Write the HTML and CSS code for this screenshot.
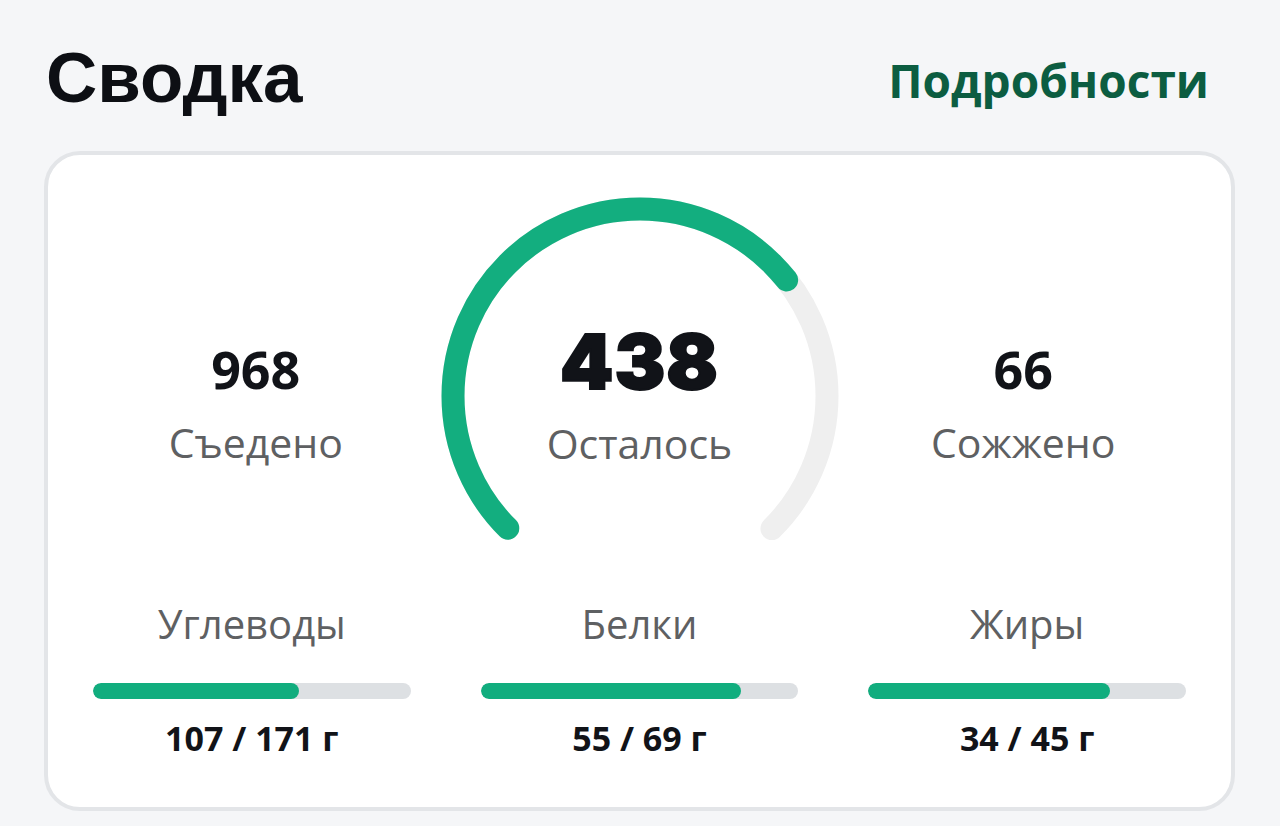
FILE: index.html
```html
<!DOCTYPE html>
<html lang="ru">
<head>
    <meta charset="UTF-8">
    <meta name="viewport" content="width=device-width, initial-scale=1.0">
    <title>Сводка</title>
    <link rel="stylesheet" href="styles.css">
</head>
<body>
    <div class="page">
        <div class="header">
            <h1>Сводка</h1>
            <a class="details" href="#">Подробности</a>
        </div>

        <div class="card">
            <div class="top-row">
                <div class="stat">
                    <div class="stat-value">968</div>
                    <div class="stat-label">Съедено</div>
                </div>

                <div class="gauge">
                    <!-- дуга 270°, начинается снизу слева -->
                    <svg width="400" height="400" viewBox="0 0 400 400">
                        <circle class="gauge-track" cx="200" cy="200" r="187"
                                stroke-dasharray="881.3 293.7" transform="rotate(135 200 200)"></circle>
                        <circle class="gauge-fill" cx="200" cy="200" r="187"
                                stroke-dasharray="609 566" transform="rotate(135 200 200)"></circle>
                    </svg>
                    <div class="gauge-center">
                        <div class="gauge-value">438</div>
                        <div class="stat-label">Осталось</div>
                    </div>
                </div>

                <div class="stat">
                    <div class="stat-value">66</div>
                    <div class="stat-label">Сожжено</div>
                </div>
            </div>

            <div class="macros">
                <div class="macro">
                    <div class="macro-name">Углеводы</div>
                    <div class="bar"><div class="bar-fill" style="width: 65%;"></div></div>
                    <div class="macro-value">107 / 171 г</div>
                </div>
                <div class="macro">
                    <div class="macro-name">Белки</div>
                    <div class="bar"><div class="bar-fill" style="width: 82%;"></div></div>
                    <div class="macro-value">55 / 69 г</div>
                </div>
                <div class="macro">
                    <div class="macro-name">Жиры</div>
                    <div class="bar"><div class="bar-fill" style="width: 76%;"></div></div>
                    <div class="macro-value">34 / 45 г</div>
                </div>
            </div>
        </div>
    </div>
</body>
</html>
```

FILE: styles.css
```css
html, body {
    margin: 0;
    padding: 0;
    background-color: #f5f6f8;
    font-family: "Open Sans", "Noto Sans", sans-serif;
    color: #111318;
}
.page {
    padding: 42px 45px 0 44px;
}
.header {
    display: flex;
    justify-content: space-between;
    align-items: center;
    margin-bottom: 38px;
}
h1 {
    margin: 0 0 0 2px;
    font-family: "Liberation Sans", Arial, sans-serif;
    font-weight: bold;
    font-size: 71px;
    line-height: 1;
    color: #0d0f14;
}
.details {
    font-size: 46px;
    font-weight: 700;
    line-height: 1;
    color: #0c5d41;
    text-decoration: none;
    padding: 4px 26px 0 0;
}
.card {
    background-color: #fff;
    border: 4px solid #e3e5e8;
    border-radius: 36px;
    padding: 41px 0 48px;
}
.top-row {
    display: grid;
    grid-template-columns: 1fr 400px 1fr;
    padding: 0 24px;
}
.stat {
    display: flex;
    flex-direction: column;
    align-items: center;
    padding-top: 142px;
}
.stat-value {
    font-size: 52px;
    font-weight: 700;
    line-height: 1.2;
    margin-bottom: 18px;
}
.stat-label {
    font-size: 41px;
    line-height: 1.2;
    color: #5e6062;
}
.gauge {
    position: relative;
    width: 400px;
    height: 400px;
}
.gauge svg {
    display: block;
}
.gauge circle {
    fill: none;
    stroke-width: 23;
    stroke-linecap: round;
}
.gauge-track {
    stroke: #efefef;
}
.gauge-fill {
    stroke: #13ae7f;
}
.gauge-center {
    position: absolute;
    top: 0;
    left: 0;
    right: 0;
    bottom: 0;
    display: flex;
    flex-direction: column;
    align-items: center;
    padding-top: 120px;
}
.gauge-value {
    font-family: Inter, sans-serif;
    font-weight: 900;
    font-size: 76px;
    line-height: 1.2;
    letter-spacing: 1px;
    -webkit-text-stroke: 2px #111318;
    margin-bottom: 12px;
}
.macros {
    display: grid;
    grid-template-columns: repeat(3, 1fr);
    gap: 70px;
    padding: 4px 45px 0;
}
.macro {
    display: flex;
    flex-direction: column;
    align-items: center;
}
.macro-name {
    font-size: 40px;
    line-height: 1.2;
    color: #5e6062;
    margin-bottom: 35px;
}
.bar {
    width: 100%;
    height: 16px;
    border-radius: 8px;
    background-color: #dde0e3;
    overflow: hidden;
    margin-bottom: 19px;
}
.bar-fill {
    height: 100%;
    border-radius: 8px;
    background-color: #11ad7e;
}
.macro-value {
    font-size: 34px;
    font-weight: 700;
    line-height: 1.2;
}
```
